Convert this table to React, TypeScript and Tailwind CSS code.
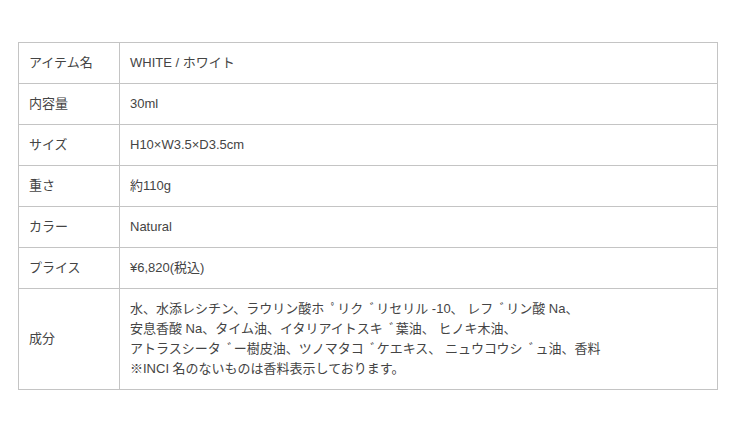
const rows: { label: string; value: string[] }[] = [
  { label: 'アイテム名', value: ['WHITE / ホワイト'] },
  { label: '内容量', value: ['30ml'] },
  { label: 'サイズ', value: ['H10×W3.5×D3.5cm'] },
  { label: '重さ', value: ['約110g'] },
  { label: 'カラー', value: ['Natural'] },
  { label: 'プライス', value: ['¥6,820(税込)'] },
  {
    label: '成分',
    value: [
      '水、水添レシチン、ラウリン酸ホ\u2002ﾟリク\u2002ﾞリセリル -10、 レフ\u2002ﾞリン酸 Na、',
      '安息香酸 Na、タイム油、イタリアイトスキ\u2002ﾞ葉油、 ヒノキ木油、',
      'アトラスシータ\u2002ﾞー樹皮油、ツノマタコ\u2002ﾞケエキス、 ニュウコウシ\u2002ﾞュ油、香料',
      '※INCI 名のないものは香料表示しております。',
    ],
  },
];

const App = () => {
  return (
    <div className="w-[740px] h-[430px] bg-white pt-[42px] pl-[18px]">
      <table
        className="w-[700px] border-collapse text-[13px] leading-[20px] text-[#444]"
        style={{ fontFamily: '"Liberation Sans", "Noto Sans CJK JP", sans-serif' }}
      >
        <tbody>
          {rows.map((row) => (
            <tr key={row.label}>
              <td className="w-[101px] border border-[#c4c4c4] pl-[10px] pr-[11px] py-[10px] align-middle">
                {row.label}
              </td>
              <td className="border border-[#c4c4c4] pl-[10px] pr-[11px] py-[10px] align-middle">
                {row.value.map((line) => (
                  <div key={line}>{line}</div>
                ))}
              </td>
            </tr>
          ))}
        </tbody>
      </table>
    </div>
  );
};

export default App;
